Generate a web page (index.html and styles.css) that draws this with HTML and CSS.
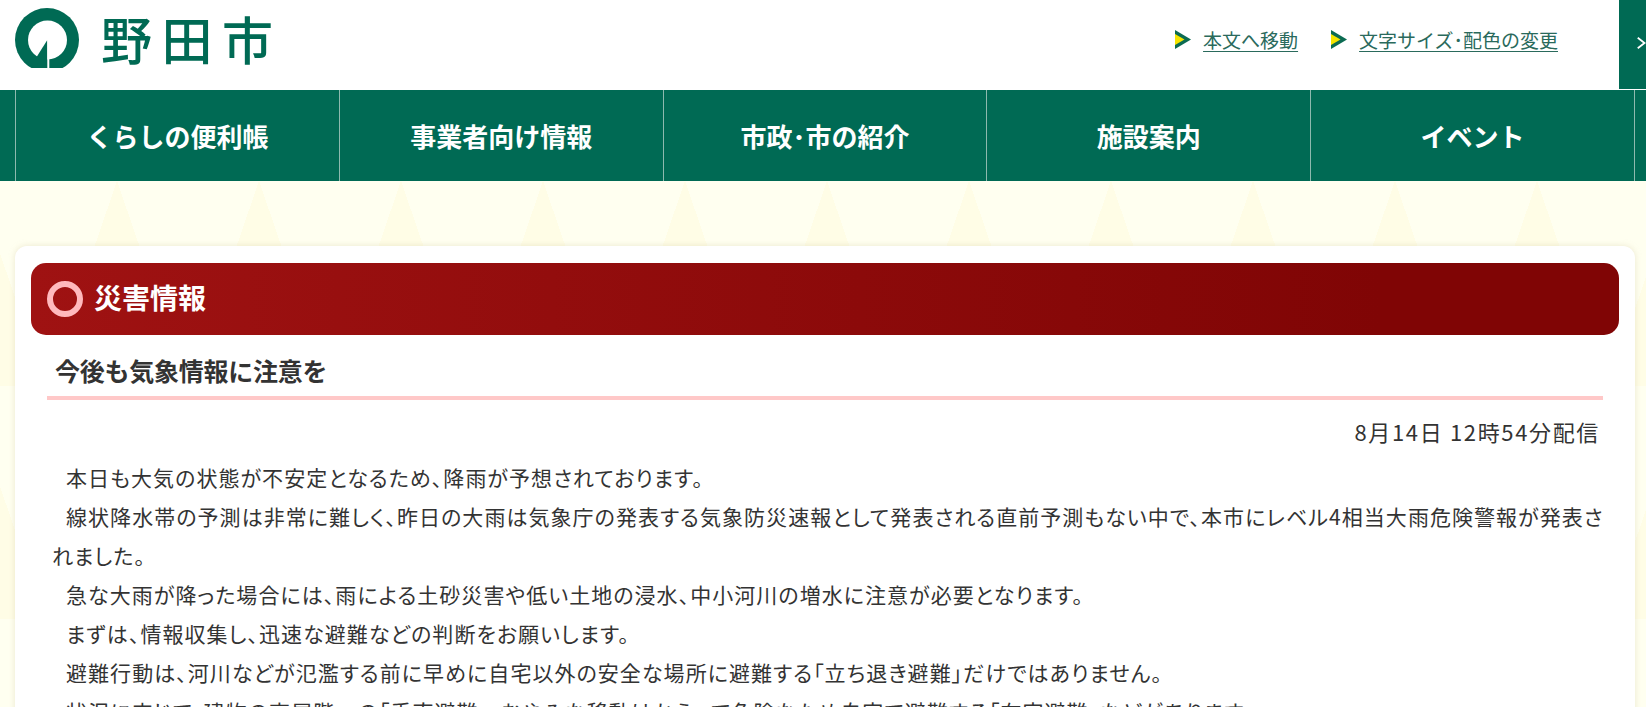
FILE: index.html
```html
<!DOCTYPE html>
<html lang="ja">
<head>
    <meta charset="UTF-8">
    <meta name="viewport" content="width=device-width, initial-scale=1.0">
    <title>野田市</title>
    <link rel="stylesheet" href="styles.css">
</head>
<body>
    <header class="header">
        <a class="logo" href="#">
            <svg class="logo-mark" width="64" height="60" viewBox="15 8 64 60">
                <circle cx="47" cy="40" r="32" fill="#006a54"/>
                <circle cx="47.5" cy="40" r="19.5" fill="#fff"/>
                <polygon points="47.3,40 36,58 38,68 47.3,68" fill="#006a54"/>
                <rect x="47.3" y="40" width="2" height="28" fill="#fff"/>
            </svg>
            <span class="logo-text">野田市</span>
        </a>
        <div class="skip-links">
            <a href="#">
                <svg class="arrow" width="16" height="19" viewBox="0 0 16 19">
                    <polygon points="0,0 16,9.5 0,19" fill="#0b6b52"/>
                    <polygon points="0,4 9.5,9.5 0,15" fill="#f5e400"/>
                </svg>
                <span>本文へ移動</span>
            </a>
            <a href="#">
                <svg class="arrow" width="16" height="19" viewBox="0 0 16 19">
                    <polygon points="0,0 16,9.5 0,19" fill="#0b6b52"/>
                    <polygon points="0,4 9.5,9.5 0,15" fill="#f5e400"/>
                </svg>
                <span>文字サイズ･配色の変更</span>
            </a>
        </div>
        <button class="side-toggle" type="button" aria-label="開く">
            <svg width="12" height="16" viewBox="0 0 12 16">
                <polyline points="1,1 10,8 1,15" fill="none" stroke="#fff" stroke-width="2.4"/>
            </svg>
        </button>
    </header>
    <nav class="nav">
        <a href="#">くらしの便利帳</a>
        <a href="#">事業者向け情報</a>
        <a href="#">市政･市の紹介</a>
        <a href="#">施設案内</a>
        <a href="#">イベント</a>
    </nav>
    <main class="main">
        <section class="card">
            <h2 class="disaster-title"><span class="ring"></span>災害情報</h2>
            <h3 class="notice-title">今後も気象情報に注意を</h3>
            <p class="notice-date">8月14日 12時54分配信</p>
            <div class="notice-body">
                <p>本日も大気の状態が不安定となるため、降雨が予想されております。</p>
                <p>線状降水帯の予測は非常に難しく、昨日の大雨は気象庁の発表する気象防災速報として発表される直前予測もない中で、本市にレベル4相当大雨危険警報が発表されました。</p>
                <p>急な大雨が降った場合には、雨による土砂災害や低い土地の浸水、中小河川の増水に注意が必要となります。</p>
                <p>まずは、情報収集し、迅速な避難などの判断をお願いします。</p>
                <p>避難行動は、河川などが氾濫する前に早めに自宅以外の安全な場所に避難する「立ち退き避難」だけではありません。</p>
                <p>状況に応じて、建物の高層階への「垂直避難」、むやみな移動はかえって危険なため自宅で避難する「在宅避難」などがあります。</p>
            </div>
        </section>
    </main>
</body>
</html>
```

FILE: styles.css
```css
html, body {
    height: 100%;
    overflow: hidden;
}

body {
    margin: 0;
    background-color: #fff;
    font-family: "Noto Sans CJK JP", "Noto Sans", sans-serif;
    color: #333;
}

a {
    color: inherit;
}

.header {
    height: 90px;
    display: flex;
    align-items: flex-start;
    justify-content: space-between;
}

.logo {
    display: flex;
    align-items: center;
    gap: 22px;
    padding: 8px 0 0 15px;
    height: 60px;
    text-decoration: none;
    color: #006a54;
}

.logo-text {
    font-size: 51px;
    font-weight: 500;
    line-height: 60px;
    letter-spacing: 9.5px;
}

.skip-links {
    display: flex;
    align-items: center;
    gap: 33px;
    height: 78px;
    margin-left: auto;
    margin-right: 61px;
    font-size: 19px;
    color: #2a6a5c;
}

.skip-links a {
    display: flex;
    align-items: center;
    gap: 12px;
    text-decoration: none;
}

.skip-links span {
    text-decoration: underline;
    text-underline-offset: 3px;
}

.side-toggle {
    width: 27px;
    height: 89px;
    padding: 0 0 4px 18px;
    border: none;
    background-color: #006a54;
    overflow: hidden;
    display: flex;
    align-items: center;
}

.nav {
    height: 91px;
    padding-left: 15px;
    display: flex;
    background-color: #006a54;
}

.nav a {
    width: 323.8px;
    box-sizing: border-box;
    padding-bottom: 1px;
    border-left: 1px solid #8db9ae;
    display: flex;
    align-items: center;
    justify-content: center;
    color: #fff;
    font-size: 26px;
    font-weight: 700;
    text-decoration: none;
}

.nav a:last-child {
    width: 324.8px;
    border-right: 1px solid #8db9ae;
}

.main {
    height: 526px;
    box-sizing: border-box;
    padding: 65px 11px 0 15px;
    background-color: #fffff0;
    background-image:
        linear-gradient(transparent 205px, #fffff0 205px),
        conic-gradient(from 161deg at 50% 0, #fffde6 38deg, transparent 0);
    background-size: 142px 233px;
    background-position: 46px 0;
}

.card {
    height: 600px;
    padding: 17px 16px 0;
    background-color: #fff;
    border-radius: 12px;
    box-shadow: 0 0 6px rgba(200, 190, 150, 0.35);
}

.disaster-title {
    height: 72px;
    margin: 0;
    padding: 0 0 4px 16px;
    box-sizing: border-box;
    display: flex;
    align-items: center;
    gap: 11px;
    border-radius: 15px;
    background: linear-gradient(to right, #9f1212, #800505 85%);
    color: #fff;
    font-size: 28px;
    font-weight: 700;
}

.ring {
    width: 36px;
    height: 36px;
    margin-top: 4px;
    box-sizing: border-box;
    border: 6.5px solid #ffb9bd;
    border-radius: 50%;
}

.notice-title {
    margin: 0 16px;
    height: 61px;
    line-height: 70px;
    padding-left: 8px;
    font-size: 25px;
    letter-spacing: -0.25px;
    font-weight: 700;
    border-bottom: 4px solid #ffc8c8;
}

.notice-date {
    margin: 12px 19px 0 0;
    text-align: right;
    font-size: 22px;
    letter-spacing: 1.65px;
    line-height: 39px;
}

.notice-body {
    padding: 7px 14px 0 21px;
    font-size: 21px;
    letter-spacing: 1.05px;
    line-height: 39px;
    font-feature-settings: "palt";
}

.notice-body p {
    margin: 0;
    text-indent: 14px;
}
```
